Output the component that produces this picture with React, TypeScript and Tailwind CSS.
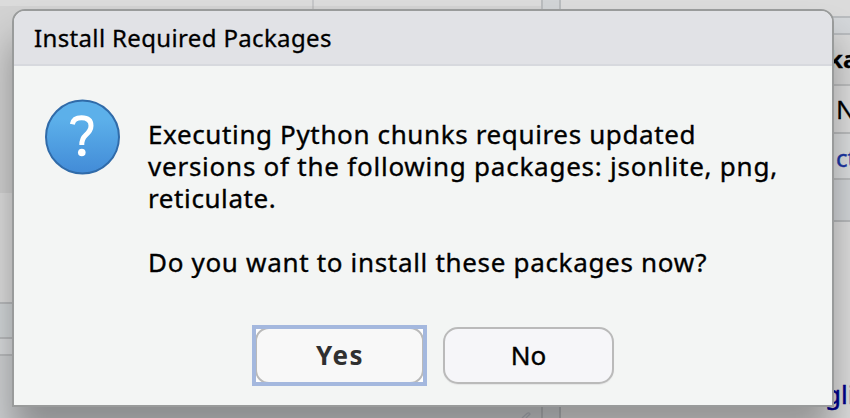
const Line = ({ c, children }: { c: string; children: string }) => (
  <span className={"block h-8 whitespace-pre " + c}>{children}</span>
);

export default function App() {
  return (
    <div className="relative flex h-[418px] w-[850px] overflow-hidden bg-[#dbdbdb] font-['Noto_Sans',sans-serif] text-[26px] text-black">
      <div className="flex w-[541px] shrink-0 flex-col">
        <div className="flex h-1.5"><i className="w-[312px]" /><i className="w-0.5 bg-[#c5c6c8]" /></div>
        <div className="flex h-[187px] bg-[#d2d2d2]"><i className="w-[312px]" /><i className="w-0.5 bg-[#c0c0c0]" /></div>
        <div className="h-[109px] bg-[#dedede]" />
        <div className="h-[37px] border-y-2 border-[#bbbdbf] bg-[#d4d8da]" />
        <div className="h-[15px] bg-[#dadcde]" />
        <div className="flex flex-1 items-end justify-end border-t-2 border-[#bbbdbf] bg-[#d0d2d4] pr-2.5">
          <svg width="10" height="6" viewBox="0 0 10 6" fill="none" stroke="#b4b8bf" strokeWidth="1.3"><path d="M1 6 L6 1.5 Q8 0 9 2 L5 6" /></svg>
        </div>
      </div>
      <div className="w-5 shrink-0 border-x-2 border-[#b9bcbe] bg-[#d1d4d6]" />
      <div className="flex flex-1 flex-col">
        <div className="h-4" />
        <div className="h-[19px] border-y-2 border-[#b9bcbf] bg-[#d4d7da]" />
        <div className="flex h-[51px] items-center border-b-2 border-[#bfc0c1] bg-[#d9d9d9] pl-[267px]"><b className="-mt-[2px] text-[24px] [-webkit-text-stroke:0.3px]">ka</b></div>
        <div className="flex h-12 items-center border-b-2 border-[#bdbfc0] bg-[#dfdfdf] pl-[275px]"><span className="[-webkit-text-stroke:0.3px]">N</span></div>
        <div className="flex h-[46px] items-center border-b-2 border-[#bdbfc0] bg-[#dddfe0] pl-[275px]"><span className="pt-1 text-[24px] text-[#1b36a5] [-webkit-text-stroke:0.4px]">ct</span></div>
        <div className="h-[42px] border-b-2 border-[#b9bbbd] bg-[#d4d7da]" />
        <div className="flex-1 bg-[#dedede]" />
      </div>

      <section className="absolute left-3 top-[9px] z-10 flex h-[398px] w-[822px] flex-col overflow-hidden rounded-t-[13px] border-2 border-[#999b9b] bg-[#f3f5f4] shadow-[0_30px_36px_rgba(0,0,0,0.33)]">
        <header className="flex h-[55px] shrink-0 items-center border-b-2 border-[#d7d9de] bg-[#e1e2e6] pl-5 text-[24px] tracking-[0.35px] [-webkit-text-stroke:0.3px]"><span>Install Required Packages</span></header>
        <div className="flex h-[230px] shrink-0 pl-[31px] pt-[33px]">
          <svg width="76" height="76" viewBox="0 0 76 76" className="mr-[27px] shrink-0">
            <defs><linearGradient id="g" x1="0" y1="0" x2="0" y2="1"><stop offset="0.25" stopColor="#5cb0ea" /><stop offset="1" stopColor="#428bd7" /></linearGradient></defs>
            <circle cx="37.5" cy="38" r="36.5" fill="url(#g)" stroke="#306ba9" strokeWidth="2" />
            <path d="M27.3 25.2 C28.2 20.7 31.5 18.8 36.5 18.8 C42.5 18.8 46 21.5 46 26.8 C46 31.5 43.5 33.8 40.5 36.3 C37.7 38.7 36.8 40.8 36.8 46" fill="none" stroke="#fff" strokeWidth="5" />
            <circle cx="36.8" cy="53.5" r="3.8" fill="#fff" />
          </svg>
          <div className="pt-[19px] leading-8 [-webkit-text-stroke:0.35px]">
            <Line c="tracking-[0.63px]">Executing Python chunks requires updated</Line>
            <Line c="tracking-[0.76px]">versions of the following packages: jsonlite, png,</Line>
            <Line c="tracking-[0.6px]">reticulate.</Line>
            <div className="h-8" />
            <Line c="tracking-[0.68px]">Do you want to install these packages now?</Line>
          </div>
        </div>
        <footer className="flex items-start pl-[238px] pt-[29px]">
          <button className="h-[61px] w-[175px] bg-white outline-4 -outline-offset-4 outline-[#a4b8de]">
            <span className="mx-[3px] flex h-[57px] items-center justify-center rounded-[14px] border-2 border-[#bababa] bg-[#f8f8f8] pl-px font-bold tracking-[1.5px] text-[#303030]">Yes</span>
          </button>
          <button className="ml-4 mt-0.5 flex h-[57px] w-[171px] items-center justify-center rounded-[15px] border-2 border-[#bababa] bg-[#f6f6f9] shadow-[0_1px_1px_#e5e6e6] [-webkit-text-stroke:0.4px]"><span>No</span></button>
        </footer>
      </section>
      <span className="absolute left-[825px] top-[378px] leading-8 text-[#00008c] [-webkit-text-stroke:0.5px]">gl<span className="text-[#8b8ba8]">i</span></span>
    </div>
  );
}
